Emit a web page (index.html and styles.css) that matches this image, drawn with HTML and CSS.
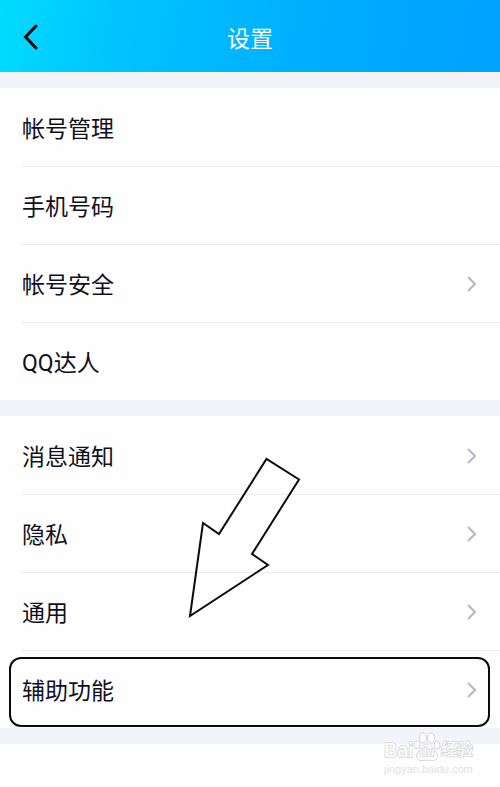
FILE: index.html
```html
<!DOCTYPE html>
<html lang="zh-CN">
  <head>
    <meta charset="utf-8" />
    <meta name="viewport" content="width=device-width, initial-scale=1" />
    <title>设置</title>
    <link rel="stylesheet" href="styles.css">
  </head>
  <body>
    <header class="topbar">
      <button type="button" class="back" aria-label="返回">
        <svg width="16" height="26" viewBox="0 0 16 26"><path d="M14 2 3.500 13 14 24" /></svg>
      </button>
      <h1 class="title">设置</h1>
    </header>

    <main class="settings">
      <ul class="group">
        <li class="row"><a href="#account">帐号管理</a></li>
        <li class="row"><a href="#phone">手机号码</a></li>
        <li class="row">
          <a href="#security">帐号安全
            <svg class="chevron" width="12" height="18" viewBox="0 0 12 18"><path d="M2 2l7 7-7 7" /></svg>
          </a>
        </li>
        <li class="row"><a href="#daren">QQ达人</a></li>
      </ul>

      <ul class="group">
        <li class="row">
          <a href="#notify">消息通知
            <svg class="chevron" width="12" height="18" viewBox="0 0 12 18"><path d="M2 2l7 7-7 7" /></svg>
          </a>
        </li>
        <li class="row">
          <a href="#privacy">隐私
            <svg class="chevron" width="12" height="18" viewBox="0 0 12 18"><path d="M2 2l7 7-7 7" /></svg>
          </a>
        </li>
        <li class="row">
          <a href="#general">通用
            <svg class="chevron" width="12" height="18" viewBox="0 0 12 18"><path d="M2 2l7 7-7 7" /></svg>
          </a>
        </li>
        <li class="row marked">
          <a href="#assist">辅助功能
            <svg class="chevron" width="12" height="18" viewBox="0 0 12 18"><path d="M2 2l7 7-7 7" /></svg>
          </a>
          <!-- pointer to the marked row -->
          <svg class="arrow" width="114" height="162" viewBox="0 0 114 162">
            <path d="M3 159 16 66l16 11L79.500 2 112 22.500 65 97l16 11z" />
          </svg>
        </li>
      </ul>
    </main>

    <footer class="watermark">
      <div class="brand">
        <span>Bai</span>
        <span class="paw">
          <svg width="28" height="30" viewBox="0 0 28 30">
            <ellipse cx="4" cy="13" rx="3" ry="4" />
            <ellipse cx="10" cy="6" rx="3.500" ry="5" />
            <ellipse cx="18" cy="6" rx="3.500" ry="5" />
            <ellipse cx="24" cy="13" rx="3" ry="4" />
            <path d="M14 12c-4 0-5 4-8 7-5 5-2 10 3 9.500 4-.5 6-.5 10 0 5 .5 8-4.500 3-9.500-3-3-4-7-8-7z" />
          </svg>
          <span class="du">du</span>
        </span>
        <span class="cn">经验</span>
      </div>
      <div class="site">jingyan.baidu.com</div>
    </footer>
  </body>
</html>
```
FILE: styles.css
```css
* {
  box-sizing: border-box;
}

body {
  margin: 0;
  background: #fefefe;
  color: #10101c;
  font-family: Roboto, "Noto Sans CJK SC", sans-serif;
  font-size: 23px;
  line-height: 34px;
}

.topbar {
  display: grid;
  grid-template-columns: 64px 1fr 64px;
  align-items: center;
  height: 72px;
  background: linear-gradient(100deg, #00dcff 0%, #00c4ff 24%, #00acff 65%, #00a2ff 100%);
}

.back {
  display: flex;
  padding: 2px 0 0 22px;
  border: 0;
  background: none;
}

.back path {
  fill: none;
  stroke: #000;
  stroke-width: 3;
  stroke-linecap: round;
}

.title {
  margin: 0;
  padding-top: 8px;
  color: #fff;
  font-size: 23px;
  font-weight: 400;
  text-align: center;
}

.group {
  margin: 0;
  padding: 0;
  list-style: none;
  border-top: 16px solid #f3f4f9;
}

.group:last-child {
  border-bottom: 16px solid #f3f4f9;
}

.row {
  position: relative;
  padding-left: 22px;
}

.row a {
  display: flex;
  align-items: center;
  justify-content: space-between;
  height: 78px;
  padding: 4px 22px 0 0;
  border-top: 1px solid transparent;
  color: inherit;
  text-decoration: none;
}

.row + .row a {
  border-top-color: #ececee;
}

.chevron {
  margin-bottom: 4px;
  fill: none;
  stroke: #b6b6c2;
  stroke-width: 2;
}

/* frame drawn round the highlighted entry */
.marked::after {
  content: "";
  position: absolute;
  top: 7px;
  right: 10px;
  bottom: 1px;
  left: 9px;
  border: 2px solid #0c0c0c;
  border-radius: 12px;
  pointer-events: none;
}

.arrow {
  position: absolute;
  bottom: 109px;
  left: 187px;
  fill: none;
  stroke: #0c0c0c;
  stroke-width: 2;
  pointer-events: none;
}

.watermark {
  position: absolute;
  top: 732px;
  right: 27px;
  color: #fff;
  font-family: "Liberation Sans", "Noto Sans CJK SC", sans-serif;
}

.brand {
  display: flex;
  align-items: flex-end;
  height: 30px;
  font-size: 20px;
  line-height: 24px;
  -webkit-text-stroke: 2px #dcdcde;
  paint-order: stroke fill;
}

.paw {
  position: relative;
}

.paw svg {
  display: block;
  fill: #fff;
  stroke: #d4d4d8;
  paint-order: normal;
}

.du {
  position: absolute;
  right: 0;
  bottom: 2px;
  left: 0;
  font-size: 13px;
  line-height: 16px;
  text-align: center;
}

.cn {
  font-size: 16px;
}

.site {
  color: #e2e2e4;
  font-size: 11px;
  line-height: 14px;
}
```
